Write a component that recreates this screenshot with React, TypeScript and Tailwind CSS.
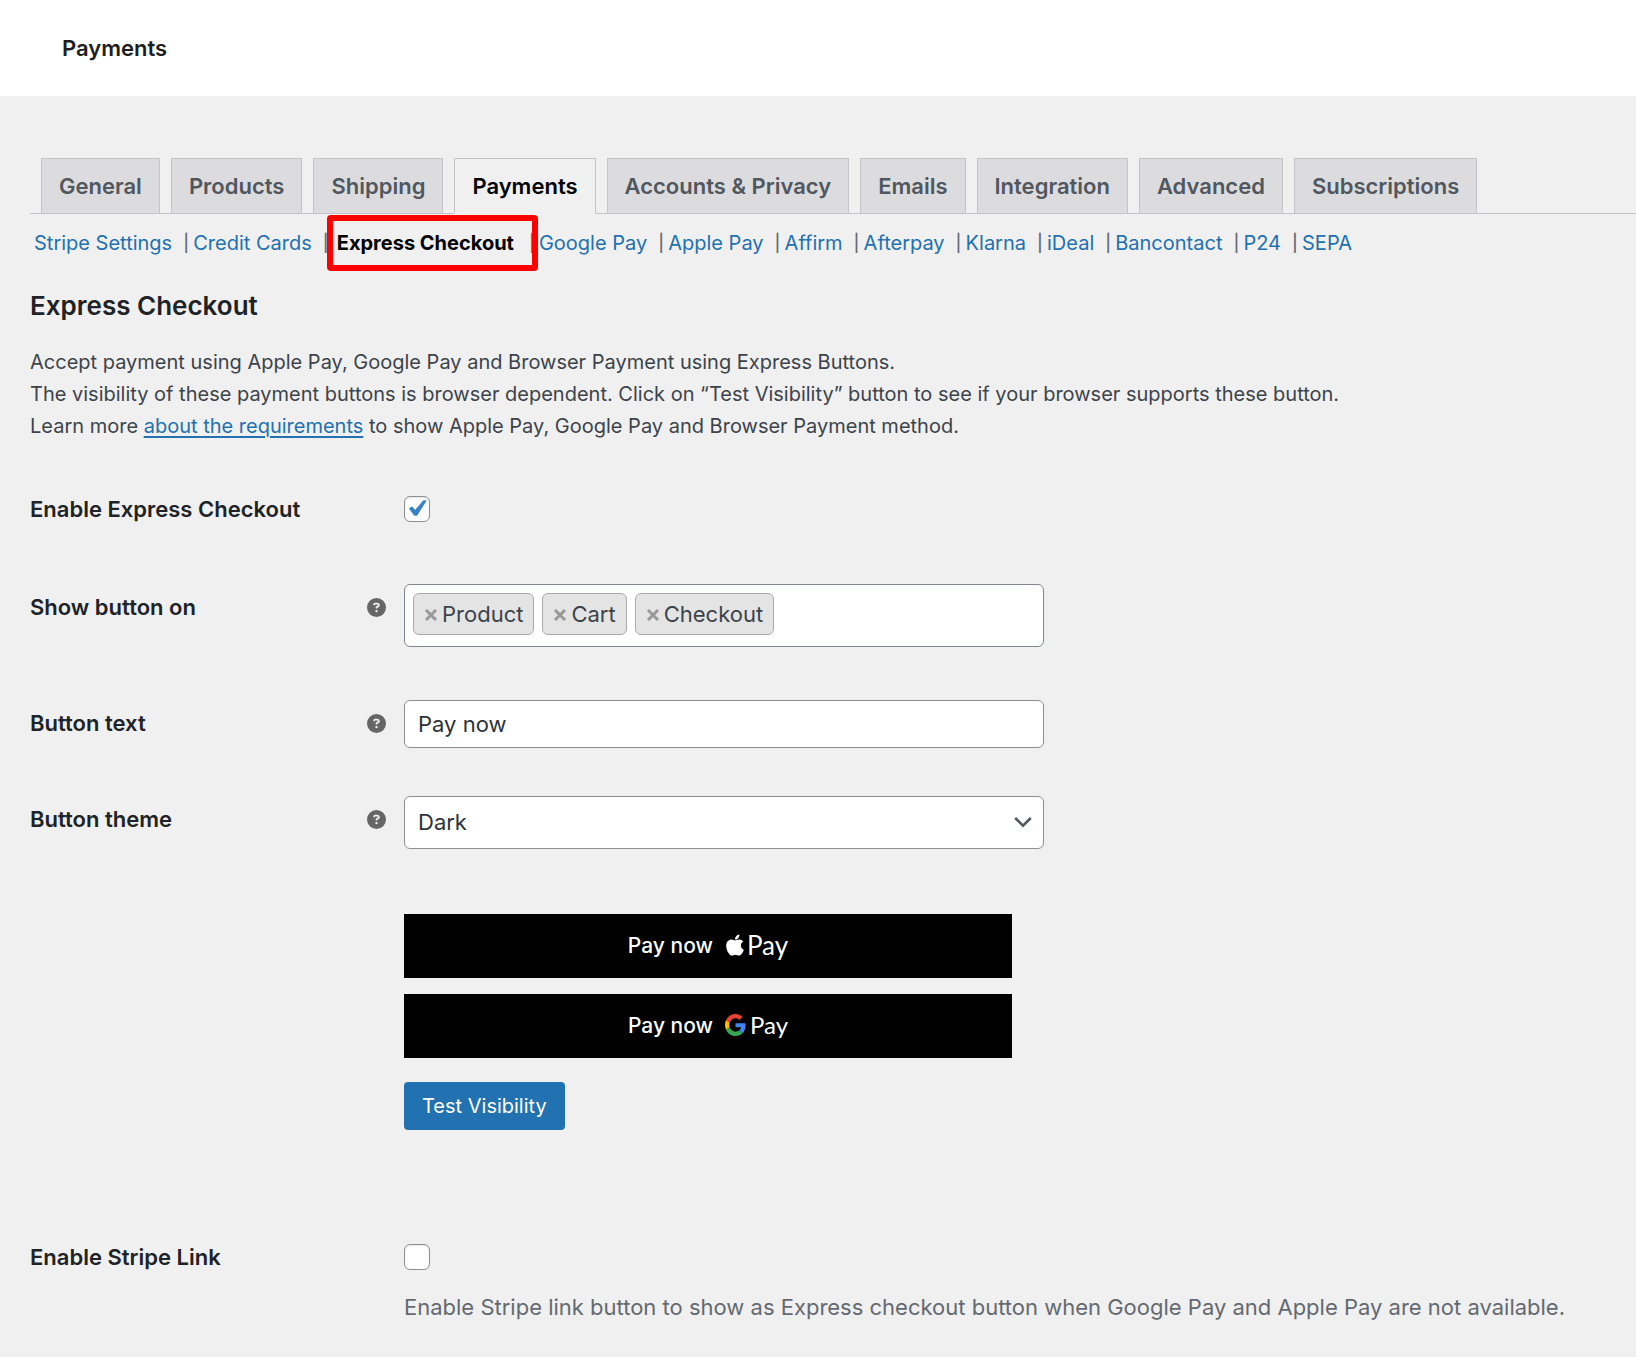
import React from "react";
import { FaApple, FaCircleQuestion } from "react-icons/fa6";

interface FieldRowProps {
  label: string;
  htmlFor: string;
  help?: string;
  className: string;
  labelClassName: string;
  children: React.ReactNode;
}

const tabs = [
  "General",
  "Products",
  "Shipping",
  "Payments",
  "Accounts & Privacy",
  "Emails",
  "Integration",
  "Advanced",
  "Subscriptions",
];

const sections = [
  "Stripe Settings",
  "Credit Cards",
  "Express Checkout",
  "Google Pay",
  "Apple Pay",
  "Affirm",
  "Afterpay",
  "Klarna",
  "iDeal",
  "Bancontact",
  "P24",
  "SEPA",
];

const locations = ["Product", "Cart", "Checkout"];

const GoogleLogo = () => (
  <svg viewBox="0 0 48 48" className="w-[21px] h-[22px]" preserveAspectRatio="none" aria-hidden="true">
    <path fill="#EA4335" d="M24 9.5c3.54 0 6.71 1.22 9.21 3.6l6.85-6.85C35.9 2.38 30.47 0 24 0 14.62 0 6.51 5.38 2.56 13.22l7.98 6.19C12.43 13.72 17.74 9.5 24 9.5z" />
    <path fill="#4285F4" d="M46.98 24.55c0-1.57-.15-3.09-.38-4.55H24v9.02h12.94c-.58 2.96-2.26 5.48-4.78 7.18l7.73 6c4.51-4.18 7.09-10.36 7.09-17.65z" />
    <path fill="#FBBC05" d="M10.53 28.59c-.48-1.45-.76-2.99-.76-4.59s.27-3.14.76-4.59l-7.98-6.19C.92 16.46 0 20.12 0 24c0 3.88.92 7.54 2.56 10.78l7.97-6.19z" />
    <path fill="#34A853" d="M24 48c6.48 0 11.93-2.13 15.89-5.81l-7.73-6c-2.15 1.45-4.92 2.3-8.16 2.3-6.26 0-11.57-4.22-13.47-9.91l-7.98 6.19C6.51 42.62 14.62 48 24 48z" />
  </svg>
);

const FieldRow: React.FC<FieldRowProps> = ({ label, htmlFor, help, className, labelClassName, children }) => (
  <div className={`flex items-start ${className}`}>
    <div className={`w-[374px] shrink-0 flex items-center justify-between pr-[18px] ${labelClassName}`}>
      <label htmlFor={htmlFor} className="text-[22px] leading-8 font-semibold text-[#1d2327]">
        {label}
      </label>
      {help && <FaCircleQuestion title={help} className="size-[19px] text-[#666]" />}
    </div>
    <div className="flex-1 min-w-0">{children}</div>
  </div>
);

const Checkbox = ({ id, defaultChecked }: { id: string; defaultChecked?: boolean }) => (
  <span className="relative block size-[26px]">
    <input
      id={id}
      type="checkbox"
      defaultChecked={defaultChecked}
      className="peer block size-[26px] appearance-none rounded-md border border-[#8c8f94] bg-white shadow-[inset_0_1px_2px_rgba(0,0,0,0.1)]"
    />
    <svg viewBox="0 0 26 26" className="absolute inset-0 hidden pointer-events-none peer-checked:block" aria-hidden="true">
      <path d="M5.4 12.6 7.8 10.8 11.3 14.2 19.4 4.8 22.2 4.8 13 19.2 10.2 19.2Z" fill="#3582c4" stroke="#3582c4" strokeWidth="0.8" strokeLinejoin="round" />
    </svg>
  </span>
);

const App: React.FC = () => {
  return (
    <div className="min-h-screen bg-[#f0f0f0] font-[Inter,sans-serif] text-[#3c434a]">
      <header className="h-24 bg-white flex items-center pl-[62px]">
        <h1 className="text-[22px] leading-8 font-semibold text-[#1e1e1e]">Payments</h1>
      </header>

      <main className="pl-[30px] pt-[62px] pb-9">
        <nav className="flex gap-[11px] pl-[11px] border-b border-[#c3c4c7]">
          {tabs.map((tab) => (
            <a
              key={tab}
              href="#"
              className={`-mb-px shrink-0 border border-[#c3c4c7] px-[17px] py-[11px] text-[22px] leading-8 font-semibold ${
                tab === "Payments" ? "bg-[#f0f0f0] border-b-[#f0f0f0] text-black" : "bg-[#dcdcde] text-[#50575e]"
              }`}
            >
              {tab}
            </a>
          ))}
        </nav>

        <ul className="flex pl-1 pt-[13px] text-[20px] leading-8 whitespace-nowrap">
          {sections.map((section, i) => (
            <li key={section} className="flex text-[#646970]">
              {section === "Express Checkout" ? (
                <a href="#" className="relative mx-1 font-bold text-black">
                  {section}
                  <span className="absolute -left-2.5 -right-6 -inset-y-3 border-6 border-[#ff0000] rounded-sm" />
                </a>
              ) : (
                <a href="#" className="text-[#2271b1]">{section}</a>
              )}
              {i < sections.length - 1 && <span className="w-[21px] pl-[11px] text-[17px] font-medium">|</span>}
            </li>
          ))}
        </ul>

        <h2 className="mt-[29px] text-[26px] leading-9 font-semibold text-[#1d2327]">Express Checkout</h2>
        <p className="mt-[22px] text-[20px] leading-8">
          Accept payment using Apple Pay, Google Pay and Browser Payment using Express Buttons.
          <br />
          The visibility of these payment buttons is browser dependent. Click on “Test Visibility” button to see if your browser supports these button.
          <br />
          Learn more{" "}
          <a href="#" className="text-[#2271b1] underline decoration-2 underline-offset-3">about the requirements</a>{" "}
          to show Apple Pay, Google Pay and Browser Payment method.
        </p>

        <form>
          <FieldRow label="Enable Express Checkout" htmlFor="enable-express" className="mt-[51px]" labelClassName="">
            <div className="pt-[3px]">
              <Checkbox id="enable-express" defaultChecked />
            </div>
          </FieldRow>

          <FieldRow label="Show button on" htmlFor="show-on" help="Select pages" className="mt-[59px]" labelClassName="pt-[7px]">
            <div className="max-w-[640px] h-[63px] flex items-start gap-2 rounded-md border border-[#7e8993] bg-white p-2">
              {locations.map((location) => (
                <span key={location} className="h-[42px] flex items-center rounded-md border border-[#aaa] bg-[#e4e4e4] px-2.5 text-[22px]">
                  <button type="button" aria-label={`Remove ${location}`} className="mr-1">
                    <svg viewBox="0 0 14 14" className="size-3.5 mt-0.5" aria-hidden="true">
                      <path d="M2 2 12 12M12 2 2 12" stroke="#999" strokeWidth="3" />
                    </svg>
                  </button>
                  {location}
                </span>
              ))}
              <input id="show-on" type="text" className="h-[42px] flex-1 min-w-0 outline-none" />
            </div>
          </FieldRow>

          <FieldRow label="Button text" htmlFor="button-text" help="Button label" className="mt-[53px]" labelClassName="pt-[7px]">
            <input
              id="button-text"
              type="text"
              defaultValue="Pay now"
              className="block w-full max-w-[640px] h-12 rounded-md border border-[#8c8f94] bg-white px-[13px] text-[22px] text-[#2c3338]"
            />
          </FieldRow>

          <FieldRow label="Button theme" htmlFor="button-theme" help="Button colours" className="mt-12" labelClassName="pt-[7px]">
            <div className="relative max-w-[640px]">
              <select
                id="button-theme"
                className="block w-full h-[53px] appearance-none rounded-md border border-[#8c8f94] bg-white px-[13px] text-[22px] text-[#2c3338]"
              >
                <option>Dark</option>
                <option>Light</option>
              </select>
              <svg viewBox="0 0 18 12" className="absolute right-3 top-5 w-[18px] h-3 pointer-events-none" aria-hidden="true">
                <path d="M1.2 2 9 9.6 16.8 2" fill="none" stroke="#50575e" strokeWidth="2.6" />
              </svg>
            </div>
          </FieldRow>

          <div className="ml-[374px] mt-[65px] max-w-[608px] flex flex-col gap-4">
            <button type="button" className="h-16 bg-black text-white text-[21px] font-medium flex items-center justify-center">
              Pay now
              <FaApple className="ml-[10px] -mt-0.5 size-6" aria-hidden="true" />
              <span className="-mt-0.5 font-[Lato,sans-serif] text-[26px] leading-8 font-normal">Pay</span>
            </button>
            <button type="button" className="h-16 bg-black text-white text-[21px] font-medium flex items-center justify-center">
              Pay now
              <span className="ml-3 -mt-0.5"><GoogleLogo /></span>
              <span className="ml-1 -mt-0.5 font-[Lato,sans-serif] text-[24px] leading-8 font-normal">Pay</span>
            </button>
          </div>
          <button type="button" className="ml-[374px] mt-6 h-12 rounded bg-[#2271b1] px-[18px] text-[20px] text-white">
            Test Visibility
          </button>

          <FieldRow label="Enable Stripe Link" htmlFor="enable-link" className="mt-[111px]" labelClassName="">
            <div className="pt-[3px]">
              <Checkbox id="enable-link" />
            </div>
            <p className="mt-[21px] text-[22px] leading-8 text-[#646970]">
              Enable Stripe link button to show as Express checkout button when Google Pay and Apple Pay are not available.
            </p>
          </FieldRow>
        </form>
      </main>
    </div>
  );
};

export default App;
